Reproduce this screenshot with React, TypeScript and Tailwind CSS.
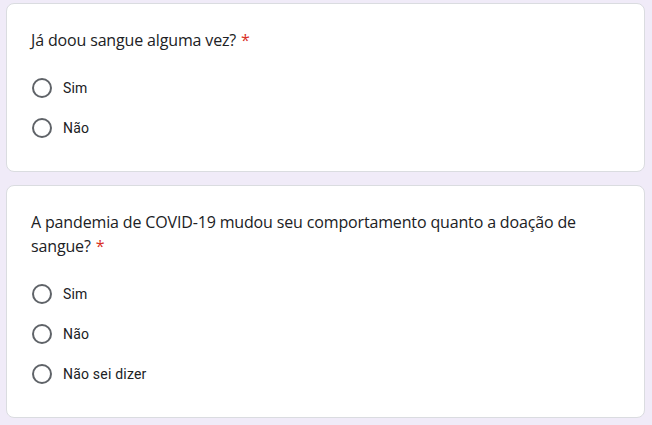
const questions = [
  {
    title: "Já doou sangue alguma vez?",
    options: ["Sim", "Não"],
  },
  {
    title: "A pandemia de COVID-19 mudou seu comportamento quanto a doação de sangue?",
    options: ["Sim", "Não", "Não sei dizer"],
  },
];

const Radio = ({ label }: { label: string }) => (
  <label className="flex items-center h-10 cursor-pointer">
    <span className="w-5 h-5 rounded-full border-2 border-[#5f6368] ml-[1px] shrink-0" />
    <span className="ml-[11px] text-[14px] tracking-[0.2px] text-[#202124] font-['Roboto',sans-serif]">{label}</span>
  </label>
);

export default function App() {
  return (
    <div className="min-h-[425px] w-full bg-[#f0ebf8] pt-[3px] pb-2">
      <div className="ml-[6px] w-[639px] flex flex-col gap-[13px]">
        {questions.map((q) => (
          <div key={q.title} className="bg-white border border-[#dadce0] rounded-lg px-6 pt-6 pb-[23px]">
            <p className="h-auto text-[16px] leading-6 tracking-[-0.15px] text-[#202124] font-['Open_Sans',sans-serif]">
              {q.title}
              <span className="ml-[5px] text-[#d93025]">*</span>
            </p>
            <div className="mt-4 flex flex-col">
              {q.options.map((o) => (
                <Radio key={o} label={o} />
              ))}
            </div>
          </div>
        ))}
      </div>
    </div>
  );
}
